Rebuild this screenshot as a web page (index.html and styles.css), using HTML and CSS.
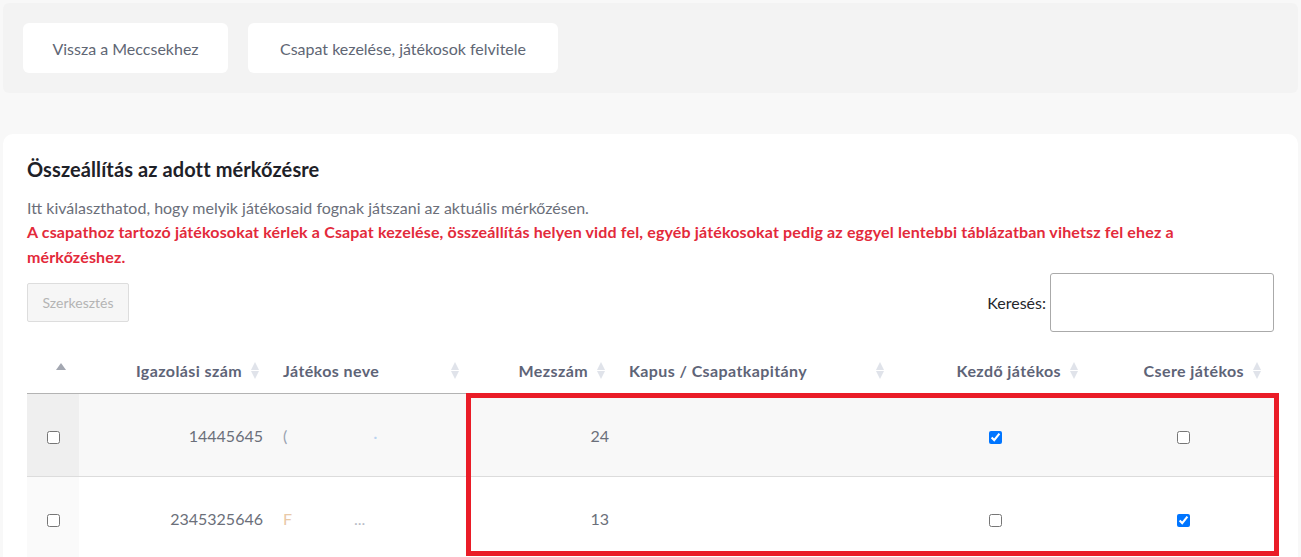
FILE: index.html
```html
<!DOCTYPE html>
<html lang="hu">
<head>
    <meta charset="UTF-8">
    <meta name="viewport" content="width=device-width, initial-scale=1.0">
    <title>Összeállítás</title>
    <link rel="stylesheet" href="styles.css">
</head>
<body>
    <div class="topbar">
        <a class="top_btn btn_back" href="#">Vissza a Meccsekhez</a>
        <a class="top_btn btn_team" href="#">Csapat kezelése, játékosok felvitele</a>
    </div>

    <div class="card">
        <h2 class="titre">Összeállítás az adott mérkőzésre</h2>
        <p class="info">Itt kiválaszthatod, hogy melyik játékosaid fognak játszani az aktuális mérkőzésen.</p>
        <p class="warn">A csapathoz tartozó játékosokat kérlek a Csapat kezelése, összeállítás helyen vidd fel, egyéb játékosokat pedig az eggyel lentebbi táblázatban vihetsz fel ehez a mérkőzéshez.</p>

        <div class="tools">
            <button class="btn_edit" disabled>Szerkesztés</button>
            <label class="search">Keresés: <input type="search" class="search_input"></label>
        </div>

        <div class="table_wrap">
            <table class="lineup">
                <colgroup>
                    <col style="width:52px">
                    <col style="width:194px">
                    <col style="width:200px">
                    <col style="width:146px">
                    <col style="width:279px">
                    <col style="width:194px">
                    <col style="width:183px">
                </colgroup>
                <thead>
                    <tr>
                        <th class="sel sort_asc"></th>
                        <th class="num sortable">Igazolási szám</th>
                        <th class="sortable">Játékos neve</th>
                        <th class="num sortable">Mezszám</th>
                        <th class="sortable">Kapus / Csapatkapitány</th>
                        <th class="num sortable">Kezdő játékos</th>
                        <th class="num sortable">Csere játékos</th>
                    </tr>
                </thead>
                <tbody>
                    <tr class="odd">
                        <td class="sel"><input type="checkbox"></td>
                        <td class="num">14445645</td>
                        <td><span class="hidden_name">(<span class="dot">·</span></span></td>
                        <td class="num">24</td>
                        <td></td>
                        <td class="chk"><input type="checkbox" checked></td>
                        <td class="chk"><input type="checkbox"></td>
                    </tr>
                    <tr>
                        <td class="sel"><input type="checkbox"></td>
                        <td class="num">2345325646</td>
                        <td><span class="hidden_name second">F<span class="dots">...</span></span></td>
                        <td class="num">13</td>
                        <td></td>
                        <td class="chk"><input type="checkbox"></td>
                        <td class="chk"><input type="checkbox" checked></td>
                    </tr>
                </tbody>
            </table>
            <div class="mark"></div>
        </div>
    </div>
</body>
</html>
```

FILE: styles.css
```css
body {
    margin: 0;
    padding: 3px;
    font-family: 'Lato', 'Noto Sans', sans-serif;
    background: #f8f8f8;
    color: #6b6f7a;
    font-size: 16px;
}

.topbar {
    background: #f3f3f3;
    border-radius: 6px;
    padding: 20px;
    height: 50px;
    display: flex;
    gap: 20px;
}

.top_btn {
    display: flex;
    align-items: center;
    justify-content: center;
    background: #ffffff;
    border-radius: 6px;
    color: #606674;
    text-decoration: none;
    font-size: 16px;
}

.btn_back {
    width: 205px;
}

.btn_team {
    width: 310px;
}

.card {
    margin-top: 41px;
    background: #ffffff;
    border-radius: 10px;
    padding: 22px 24px 24px;
    min-height: 500px;
}

.titre {
    margin: 0;
    font-size: 20px;
    font-weight: 700;
    color: #1e2128;
    line-height: 26px;
    letter-spacing: 0.1px;
}

.info,
.warn {
    margin: 0;
}

.info {
    margin-top: 15px;
    line-height: 22px;
    color: #6b6f7a;
}

.warn {
    max-width: 1200px;
    color: #e32a3b;
    font-weight: 700;
    line-height: 25px;
    letter-spacing: 0.15px;
}

.tools {
    margin-top: 4px;
    display: flex;
    justify-content: space-between;
    align-items: center;
}

.btn_edit {
    width: 102px;
    height: 39px;
    background: #f6f6f6;
    border: 1px solid #dddddd;
    border-radius: 2px;
    color: #b4b4b4;
    font-family: inherit;
    font-size: 14px;
}

.search {
    display: flex;
    align-items: center;
    gap: 4px;
    color: #25272c;
}

.search_input {
    width: 224px;
    height: 59px;
    box-sizing: border-box;
    border: 1px solid #aaaaaa;
    border-radius: 3px;
    background: #ffffff;
}

.table_wrap {
    position: relative;
    margin-top: 9px;
}

.lineup {
    width: 100%;
    table-layout: fixed;
    border-collapse: collapse;
}

.lineup th {
    position: relative;
    height: 46px;
    padding: 6px 31px 0 10px;
    text-align: left;
    font-weight: 700;
    font-size: 16px;
    letter-spacing: 0.4px;
    color: #5e6477;
    border-bottom: 1px solid #b3b3b3;
    vertical-align: middle;
}

.lineup th.num {
    text-align: right;
}

.lineup th.sortable::before,
.lineup th.sortable::after,
.lineup th.sort_asc::before {
    content: '';
    position: absolute;
    right: 14px;
    width: 0;
    height: 0;
    border-left: 4px solid transparent;
    border-right: 4px solid transparent;
}

.lineup th.sortable::before {
    top: 21px;
    border-bottom: 8px solid #e0e3ea;
}

.lineup th.sortable::after {
    top: 30px;
    border-top: 8px solid #e0e3ea;
}

.lineup th.sort_asc::before {
    top: 22px;
    right: 13px;
    border-left-width: 5px;
    border-right-width: 5px;
    border-bottom: 7px solid #a3a7b1;
}

.lineup td {
    height: 82px;
    padding: 0 10px;
    border-bottom: 1px solid #dcdcdc;
    vertical-align: middle;
}

.lineup td.num {
    text-align: right;
}

.lineup td.chk,
.lineup td.sel {
    text-align: center;
    padding: 0;
}

.lineup tr.odd td {
    background: #f8f8f8;
}

.lineup td.sel {
    background: #fafafa;
}

.lineup tr.odd td.sel {
    background: #efefef;
}

.lineup input[type="checkbox"] {
    margin: 0;
    width: 13px;
    height: 13px;
    vertical-align: middle;
}

.hidden_name {
    color: #9aa2b0;
}

.hidden_name .dot {
    margin-left: 86px;
    color: #b9d3f0;
}

.hidden_name.second {
    color: #e9c9a8;
}

.hidden_name .dots {
    margin-left: 62px;
    color: #b8bcc6;
}

.mark {
    position: absolute;
    left: 439px;
    top: 52px;
    width: 813px;
    height: 163px;
    box-sizing: border-box;
    border: 5px solid #ea1c27;
    pointer-events: none;
}
```
